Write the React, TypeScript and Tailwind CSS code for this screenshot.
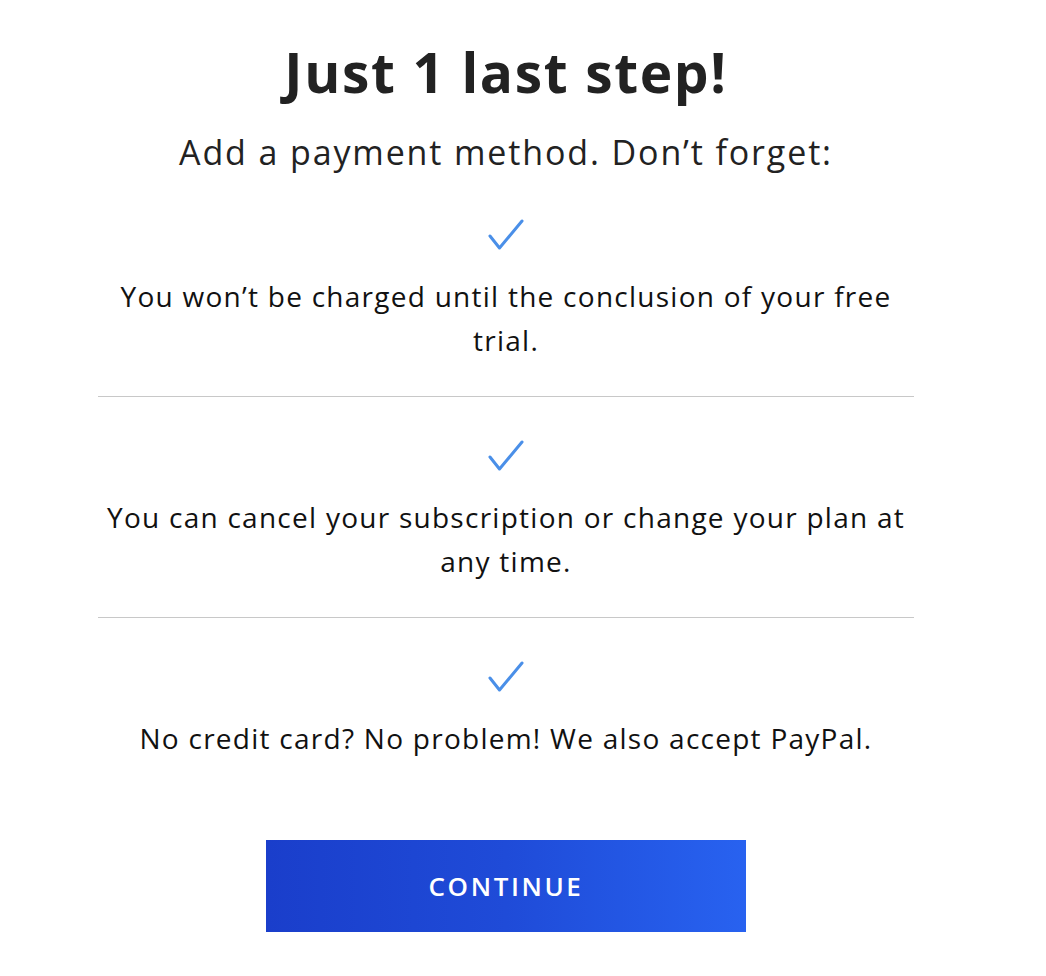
import React from "react"

const items = [
  "You won\u2019t be charged until the conclusion of your free trial.",
  "You can cancel your subscription or change your plan at any time.",
  "No credit card? No problem! We also accept PayPal.",
]

function Check() {
  return (
    <svg width="38" height="34" viewBox="0 0 38 34" fill="none">
      <path
        d="M3 18 L12.5 30 L35 3"
        stroke="#4a8fe8"
        strokeWidth="3"
        strokeLinecap="round"
        strokeLinejoin="round"
      />
    </svg>
  )
}

export default function App() {
  return (
    <div className="min-h-screen bg-white font-['Open_Sans',sans-serif] text-[#1a1a1a]">
      <div className="ml-[98px] w-[816px] flex flex-col items-center text-center pt-[42px]">
        <h1 className="text-[55px] font-bold leading-[60px] text-[#222] tracking-[0.03em]">Just 1 last step!</h1>
        <p className="mt-[30px] text-[34px] leading-[40px] text-[#222] tracking-[0.055em]">Add a payment method. Don’t forget:</p>

        <div className="mt-[46px] w-full">
          {items.map((text, i) => (
            <div key={i} className="w-full">
              {i > 0 && <div className="h-px w-full bg-[#c8c8c8]" />}
              <div className={`flex flex-col items-center ${i > 0 ? "pt-[42px]" : ""} ${i < 2 ? "pb-[34px]" : ""}`}>
                <Check />
                <p className="mt-[22px] text-[28px] leading-[44px] text-[#111] tracking-[0.045em]">{text}</p>
              </div>
            </div>
          ))}
        </div>

        <button className="mt-[80px] h-[92px] w-[480px] bg-gradient-to-r from-[#1a3ecb] via-[#1f4bd8] to-[#2862f0] text-white text-[26px] font-semibold tracking-[0.1em]">
          CONTINUE
        </button>
      </div>
    </div>
  )
}
